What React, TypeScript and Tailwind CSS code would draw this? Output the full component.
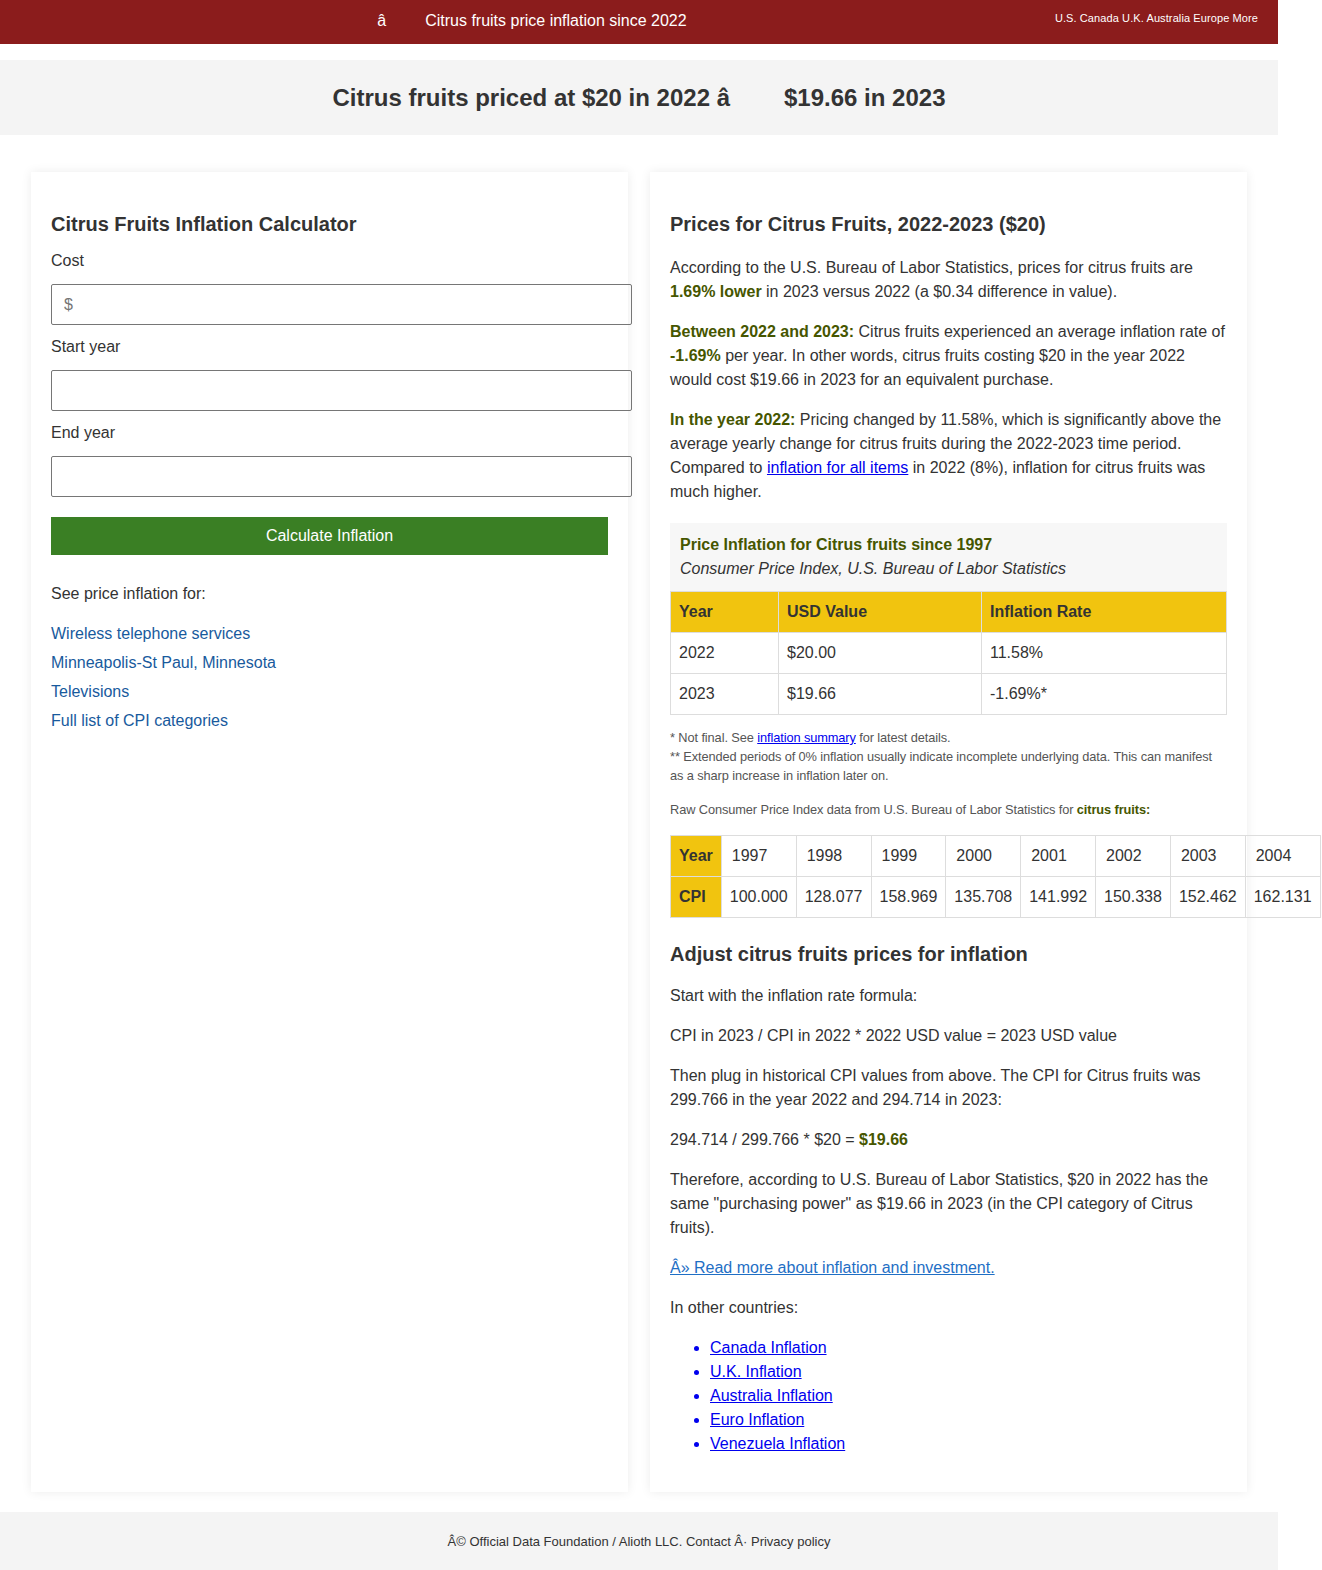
import React from "react";

const olive = "text-[#465600]";

function Gap({ w }: { w: string }) {
  return <span className={`inline-block ${w}`} />;
}

export default function App() {
  const years = ["1997", "1998", "1999", "2000", "2001", "2002", "2003", "2004"];
  const cpis = ["100.000", "128.077", "158.969", "135.708", "141.992", "150.338", "152.462", "162.131"];
  return (
    <div className="w-[1278px] font-['Liberation_Sans',Arial,sans-serif] text-[#333] text-[16px] leading-[24px] bg-white">
      {/* Header */}
      <header className="h-[44px] bg-[#8b1c1c] flex items-start text-white">
        <div className="flex-1 text-center text-[16px] pt-[9px] pl-[9px]">
          â<Gap w="w-[39px]" />Citrus fruits price inflation since 2022
        </div>
        <nav className="text-[11px] leading-[14px] pt-[11px] pr-[20px] tracking-[0.1px]">U.S. Canada U.K. Australia Europe More</nav>
      </header>

      {/* Title band */}
      <div className="mt-[16px] h-[75px] bg-[#f4f4f4] flex items-center justify-center">
        <h1 className="text-[24px] leading-[28px] font-bold text-[#333]">
          Citrus fruits priced at $20 in 2022 â<Gap w="w-[54px]" />$19.66 in 2023
        </h1>
      </div>

      {/* Cards */}
      <div className="mt-[37px] px-[31px] flex gap-[22px] items-stretch">
        {/* Left card */}
        <div className="w-[597px] bg-white shadow-[0_0_10px_rgba(0,0,0,0.08)] px-[20px] pt-[20px] pb-[20px]">
          <h2 className="mt-[20px] text-[20px] leading-[24px] font-bold">Citrus Fruits Inflation Calculator</h2>
          <div className="mt-[13px]">Cost</div>
          <input
            className="mt-[11px] block w-[581px] h-[41px] border border-[#767676] rounded-[2px] px-[12px] text-[16px] placeholder:text-[#757575]"
            placeholder="$"
          />
          <div className="mt-[10px]">Start year</div>
          <input className="mt-[11px] block w-[581px] h-[41px] border border-[#767676] rounded-[2px] px-[12px]" />
          <div className="mt-[10px]">End year</div>
          <input className="mt-[11px] block w-[581px] h-[41px] border border-[#767676] rounded-[2px] px-[12px]" />
          <button className="mt-[20px] block w-full h-[38px] bg-[#3a7f24] text-white text-[16px]">Calculate Inflation</button>
          <p className="mt-[27px]">See price inflation for:</p>
          <div className="mt-[13px] flex flex-col text-[#185a9d]">
            <a className="leading-[29px]">Wireless telephone services</a>
            <a className="leading-[29px]">Minneapolis-St Paul, Minnesota</a>
            <a className="leading-[29px]">Televisions</a>
            <a className="leading-[29px]">Full list of CPI categories</a>
          </div>
        </div>

        {/* Right card */}
        <div className="w-[597px] bg-white shadow-[0_0_10px_rgba(0,0,0,0.08)] px-[20px] pt-[20px] pb-[20px]">
          <h2 className="mt-[20px] text-[20px] leading-[24px] font-bold">Prices for Citrus Fruits, 2022-2023 ($20)</h2>
          <p className="mt-[20px]">
            According to the U.S. Bureau of Labor Statistics, prices for citrus fruits are{" "}
            <b className={olive}>1.69% lower</b> in 2023 versus 2022 (a $0.34 difference in value).
          </p>
          <p className="mt-[16px]">
            <b className={olive}>Between 2022 and 2023:</b> Citrus fruits experienced an average inflation rate of{" "}
            <b className={olive}>-1.69%</b> per year. In other words, citrus fruits costing $20 in the year 2022 would cost
            $19.66 in 2023 for an equivalent purchase.
          </p>
          <p className="mt-[16px]">
            <b className={olive}>In the year 2022:</b> Pricing changed by 11.58%, which is significantly above the average
            yearly change for citrus fruits during the 2022-2023 time period. Compared to{" "}
            <a className="text-[#0000ee] underline">inflation for all items</a> in 2022 (8%), inflation for citrus fruits was
            much higher.
          </p>

          <div className="mt-[19px] bg-[#f7f7f7] px-[10px] pt-[10px] pb-[10px] w-[557px]">
            <div className={`font-bold ${olive}`}>Price Inflation for Citrus fruits since 1997</div>
            <div className="italic">Consumer Price Index, U.S. Bureau of Labor Statistics</div>
          </div>
          <table className="w-[557px] border-collapse">
            <thead>
              <tr className="bg-[#f1c40f] font-bold">
                <td className="border border-[#ddd] px-[8px] h-[41px] w-[108px]">Year</td>
                <td className="border border-[#ddd] px-[8px] h-[41px] w-[203px]">USD Value</td>
                <td className="border border-[#ddd] px-[8px] h-[41px]">Inflation Rate</td>
              </tr>
            </thead>
            <tbody>
              <tr>
                <td className="border border-[#ddd] px-[8px] h-[41px]">2022</td>
                <td className="border border-[#ddd] px-[8px] h-[41px]">$20.00</td>
                <td className="border border-[#ddd] px-[8px] h-[41px]">11.58%</td>
              </tr>
              <tr>
                <td className="border border-[#ddd] px-[8px] h-[41px]">2023</td>
                <td className="border border-[#ddd] px-[8px] h-[41px]">$19.66</td>
                <td className="border border-[#ddd] px-[8px] h-[41px]">-1.69%*</td>
              </tr>
            </tbody>
          </table>

          <div className="mt-[13px] text-[12.8px] leading-[19px] text-[#555] tracking-[-0.1px]">
            <div>
              * Not final. See <a className="text-[#0000ee] underline">inflation summary</a> for latest details.
            </div>
            <div>
              ** Extended periods of 0% inflation usually indicate incomplete underlying data. This can manifest as a sharp
              increase in inflation later on.
            </div>
          </div>
          <p className="mt-[15px] text-[12.8px] leading-[19px] text-[#555] tracking-[-0.1px]">
            Raw Consumer Price Index data from U.S. Bureau of Labor Statistics for <b className={olive}>citrus fruits:</b>
          </p>

          <table className="mt-[16px] border-collapse whitespace-nowrap">
            <tbody>
              <tr>
                <td className="bg-[#f1c40f] font-bold border border-[#ddd] px-[8px] h-[41px]">Year</td>
                {years.map((y) => (
                  <td key={y} className="border border-[#ddd] px-[10px] h-[41px] w-[75px]">
                    {y}
                  </td>
                ))}
              </tr>
              <tr>
                <td className="bg-[#f1c40f] font-bold border border-[#ddd] px-[8px] h-[41px]">CPI</td>
                {cpis.map((c) => (
                  <td key={c} className="border border-[#ddd] px-[8px] h-[41px]">
                    {c}
                  </td>
                ))}
              </tr>
            </tbody>
          </table>

          <h2 className="mt-[24px] text-[20px] leading-[24px] font-bold">Adjust citrus fruits prices for inflation</h2>
          <p className="mt-[18px]">Start with the inflation rate formula:</p>
          <p className="mt-[16px]">CPI in 2023 / CPI in 2022 * 2022 USD value = 2023 USD value</p>
          <p className="mt-[16px]">
            Then plug in historical CPI values from above. The CPI for Citrus fruits was 299.766 in the year 2022 and
            294.714 in 2023:
          </p>
          <p className="mt-[16px]">
            294.714 / 299.766 * $20 = <b className={olive}>$19.66</b>
          </p>
          <p className="mt-[16px]">
            Therefore, according to U.S. Bureau of Labor Statistics, $20 in 2022 has the same "purchasing power" as $19.66 in
            2023 (in the CPI category of Citrus fruits).
          </p>
          <p className="mt-[16px]">
            <a className="text-[#1f6fc5] underline">Â» Read more about inflation and investment.</a>
          </p>
          <p className="mt-[16px]">In other countries:</p>
          <ul className="mt-[16px] mb-[16px] list-disc pl-[40px] text-[#0000ee]">
            <li><a className="underline">Canada Inflation</a></li>
            <li><a className="underline">U.K. Inflation</a></li>
            <li><a className="underline">Australia Inflation</a></li>
            <li><a className="underline">Euro Inflation</a></li>
            <li><a className="underline">Venezuela Inflation</a></li>
          </ul>
        </div>
      </div>

      {/* Footer */}
      <footer className="mt-[20px] h-[62px] bg-[#f4f4f4] flex items-start justify-center pt-[21px] text-[13px] leading-[18px]">
        Â© Official Data Foundation / Alioth LLC. Contact Â· Privacy policy
      </footer>
    </div>
  );
}
